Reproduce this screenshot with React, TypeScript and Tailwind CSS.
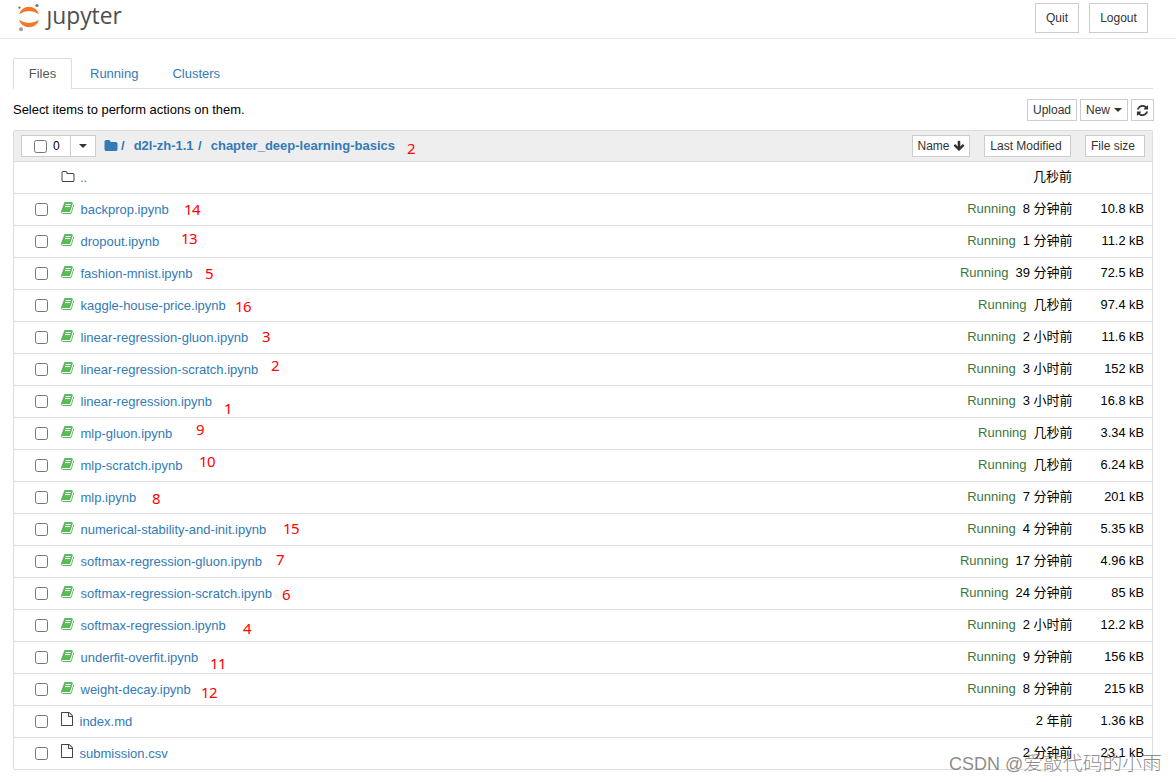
import type { ReactNode } from 'react';

const paths = {
  book: 'M1639 478q40 57 18 129l-275 906q-19 64-76.500 107.500t-122.500 43.500h-923q-77 0-148.500-53.500t-99.500-131.500q-24-67-2-127 0-4 3-27t4-37q1-8-3-21.500t-3-19.500q2-11 8-21t16.500-23.500 16.500-23.500q23-38 45-91.500t30-91.500q3-10 .5-30t-.5-28q3-11 17-28t17-23q21-36 42-92t25-90q1-9-2.500-32t.5-28q4-13 22-30.500t22-22.500q19-26 42.500-84.500t27.500-96.500q1-8-3-25.500t-2-26.500q2-8 9-18t18-23 17-21q8-12 16.500-30.500t15-35 16-36 19.500-32 26.500-23.500 36-11.500 47.500 5.500l-1 3q38-9 51-9h761q74 0 114 56t18 130l-274 906q-36 119-71.500 153.500t-128.500 34.500h-869q-27 0-38 15-11 16-1 43 24 70 144 70h923q29 0 56-15.500t35-41.500l300-987q7-22 5-57 38 15 59 43zm-1064 2q-4 13 2 22.500t20 9.500h608q13 0 25.500-9.500t16.500-22.500l21-64q4-13-2-22.500t-20-9.500h-608q-13 0-25.500 9.500t-16.500 22.500zm-83 256q-4 13 2 22.500t20 9.500h608q13 0 25.500-9.500t16.500-22.500l21-64q4-13-2-22.500t-20-9.500h-608q-13 0-25.500 9.500t-16.500 22.500z',
  refresh: 'M1639 1056q0 5-1 7-64 268-268 434.500t-478 166.500q-146 0-282.500-55t-243.500-157l-129 129q-19 19-45 19t-45-19-19-45v-448q0-26 19-45t45-19h448q26 0 45 19t19 45-19 45l-137 137q71 66 161 102t187 36q134 0 250-65t186-179q11-17 53-117 8-23 30-23h192q13 0 22.500 9.500t9.500 22.500zm25-800v448q0 26-19 45t-45 19h-448q-26 0-45-19t-19-45 19-45l138-138q-148-137-349-137-134 0-250 65t-186 179q-11 17-53 117-8 23-30 23h-199q-13 0-22.500-9.500t-9.500-22.500v-7q65-268 270-434.500t480-166.500q146 0 284 55.500t245 156.500l130-129q19-19 45-19t45 19 19 45z',
  arrowDown: 'M1675 832q0 53-37 90l-651 652q-39 37-91 37-53 0-90-37l-651-652q-38-36-38-90 0-53 38-91l74-75q39-37 91-37 53 0 90 37l294 294v-704q0-52 38-90t90-38h128q52 0 90 38t38 90v704l294-294q37-37 90-37 52 0 91 37l75 75q37 39 37 91z',
  folder: 'M1728 608v704q0 92-66 158t-158 66h-1216q-92 0-158-66t-66-158v-960q0-92 66-158t158-66h320q92 0 158 66t66 158v32h672q92 0 158 66t66 158z',
  folderOpen: 'M1600 1312v-704q0-40-28-68t-68-28h-704q-40 0-68-28t-28-68v-64q0-40-28-68t-68-28h-320q-40 0-68 28t-28 68v960q0 40 28 68t68 28h1216q40 0 68-28t28-68zm128-704v704q0 92-66 158t-158 66h-1216q-92 0-158-66t-66-158v-960q0-92 66-158t158-66h320q92 0 158 66t66 158v32h672q92 0 158 66t66 158z',
  file: 'M1596 380q28 28 48 76t20 88v1152q0 40-28 68t-68 28h-1344q-40 0-68-28t-28-68v-1600q0-40 28-68t68-28h896q40 0 88 20t76 48zm-444-244v376h376q-10-29-22-41l-313-313q-12-12-41-22zm384 1528v-1024h-416q-40 0-68-28t-28-68v-416h-768v1536h1280z',
};

function Icon({ name, className }: { name: keyof typeof paths; className: string }) {
  return (
    <svg viewBox="0 0 1792 1792" fill="currentColor" className={`shrink-0 ${className}`}>
      <path d={paths[name]} />
    </svg>
  );
}

function Caret() {
  return <span className="inline-block border-x-4 border-t-4 border-x-transparent border-t-[#333]" />;
}

function Checkbox({ className = '' }: { className?: string }) {
  return <span className={`size-[13px] shrink-0 rounded-[2.5px] border border-[#767676] bg-white ${className}`} />;
}

function Button({ children, className }: { children: ReactNode; className: string }) {
  return (
    <button className={`flex items-center justify-center border border-[#ccc] bg-white text-[#333] ${className}`}>
      {children}
    </button>
  );
}

type Entry = { name: string; time: string; size: string; running?: boolean };

const entries: Entry[] = [
  { name: 'backprop.ipynb', time: '8 分钟前', size: '10.8 kB', running: true },
  { name: 'dropout.ipynb', time: '1 分钟前', size: '11.2 kB', running: true },
  { name: 'fashion-mnist.ipynb', time: '39 分钟前', size: '72.5 kB', running: true },
  { name: 'kaggle-house-price.ipynb', time: '几秒前', size: '97.4 kB', running: true },
  { name: 'linear-regression-gluon.ipynb', time: '2 小时前', size: '11.6 kB', running: true },
  { name: 'linear-regression-scratch.ipynb', time: '3 小时前', size: '152 kB', running: true },
  { name: 'linear-regression.ipynb', time: '3 小时前', size: '16.8 kB', running: true },
  { name: 'mlp-gluon.ipynb', time: '几秒前', size: '3.34 kB', running: true },
  { name: 'mlp-scratch.ipynb', time: '几秒前', size: '6.24 kB', running: true },
  { name: 'mlp.ipynb', time: '7 分钟前', size: '201 kB', running: true },
  { name: 'numerical-stability-and-init.ipynb', time: '4 分钟前', size: '5.35 kB', running: true },
  { name: 'softmax-regression-gluon.ipynb', time: '17 分钟前', size: '4.96 kB', running: true },
  { name: 'softmax-regression-scratch.ipynb', time: '24 分钟前', size: '85 kB', running: true },
  { name: 'softmax-regression.ipynb', time: '2 小时前', size: '12.2 kB', running: true },
  { name: 'underfit-overfit.ipynb', time: '9 分钟前', size: '156 kB', running: true },
  { name: 'weight-decay.ipynb', time: '8 分钟前', size: '215 kB', running: true },
  { name: 'index.md', time: '2 年前', size: '1.36 kB' },
  { name: 'submission.csv', time: '2 分钟前', size: '23.1 kB' },
];

// Reading-order markers placed freely over the list: label, left, vertical centre.
const notes: [string, number, number][] = [
  ['2', 407, 148], ['14', 184, 209], ['13', 181, 238], ['5', 205, 273], ['16', 235, 306],
  ['3', 262, 336], ['2', 271, 365], ['1', 224, 408], ['9', 196, 429], ['10', 199, 461],
  ['8', 152, 498], ['15', 283, 528], ['7', 276, 559], ['6', 282, 594], ['4', 243, 628],
  ['11', 210, 663], ['12', 201, 692],
];

function Row({ entry }: { entry: Entry }) {
  const notebook = entry.name.endsWith('.ipynb');
  return (
    <li className="flex h-8 items-center border-t border-[#ddd] pr-2 pl-[21px]">
      <Checkbox />
      {notebook ? (
        <Icon name="book" className="mr-[5.5px] mb-[3px] ml-[13px] size-[14px] text-[#5cb85c]" />
      ) : (
        <Icon name="file" className="mr-[5.5px] mb-[5px] ml-[12px] size-[14px] text-[#444]" />
      )}
      <a className="text-[#337ab7]">{entry.name}</a>
      <div className="ml-auto flex pb-0.5 text-[13px]">
        {entry.running && <span className="mr-[7px] text-[#3c763d]">Running</span>}
        <span>{entry.time}</span>
        <span className="w-[71.5px] text-right text-[12.8px]">{entry.size}</span>
      </div>
    </li>
  );
}

export default function App() {
  return (
    <div className="relative h-[782px] w-[1176px] overflow-hidden bg-white font-['Liberation_Sans','Noto_Sans_CJK_SC',sans-serif] text-[13px] leading-5 text-black">
      <header className="flex h-[39px] items-start border-b border-[#e7e7e7] pr-7 pl-[17px]">
        <svg viewBox="0 0 24 32" className="mt-0.5 h-8 w-6">
          <path d="M2 12.300A10.400 10.400 0 0 1 22 12.300Q12 5.500 2 12.300ZM2 17.700A10.400 10.400 0 0 0 22 17.700Q12 24.500 2 17.700Z" fill="#f37726" />
          <circle cx="20" cy="3.500" r="1.600" fill="#767677" />
          <circle cx="2.500" cy="5.700" r="1.100" fill="#616262" />
          <circle cx="4" cy="27.300" r="2" fill="#9e9e9e" />
        </svg>
        <span className="ml-[5.5px] font-['Open_Sans',sans-serif] text-[22.800px] leading-[32px] text-[#4e4e4e]">ȷupyter</span>
        <div className="mt-[3px] ml-auto flex gap-[10px] text-[12px]">
          <Button className="h-[30px] w-[44px]">Quit</Button>
          <Button className="h-[30px] w-[59px]">Logout</Button>
        </div>
      </header>

      <main className="pr-[23px] pl-[13px]">
        <nav className="mt-[19px] flex h-[31px] border-b border-[#ddd]">
          <a className="h-[31px] w-[59px] rounded-t-[2px] border border-b-0 border-[#ddd] bg-white pt-[5px] text-center text-[#555]">Files</a>
          <a className="pt-[6px] pl-[18px] text-[#337ab7]">Running</a>
          <a className="pt-[6px] pl-[34px] text-[#337ab7]">Clusters</a>
        </nav>

        <div className="-mr-px flex h-[41px] pt-[10px] text-[12px]">
          <span className="mt-px mr-auto text-[12.950px]">Select items to perform actions on them.</span>
          <Button className="mr-[3px] h-[22px] w-[50px]">Upload</Button>
          <Button className="mr-[3px] h-[22px] w-[48px] gap-1">New <Caret /></Button>
          <Button className="h-[22px] w-[23px]"><Icon name="refresh" className="size-[13px]" /></Button>
        </div>

        <section className="rounded-[2px] border border-[#ddd]">
          <div className="flex h-[30px] items-center bg-[#eee] pl-[7px] text-[12px]">
            <div className="flex h-[22px] w-[75px] border border-[#ccc] bg-white">
              <span className="flex w-[49px] items-center border-r border-[#ccc] pl-3">
                <Checkbox className="mr-[6px]" />0
              </span>
              <span className="flex grow items-center justify-center"><Caret /></span>
            </div>
            <div className="flex items-center text-[13px] font-bold text-[#337ab7]">
              <Icon name="folder" className="ml-2 size-[14px]" />
              <span className="ml-[3px]">/</span>
              <a className="ml-[9px]">d2l-zh-1.1</a>
              <span className="ml-[4.5px]">/</span>
              <a className="ml-[9px]">chapter_deep-learning-basics</a>
            </div>
            <Button className="mr-[14px] ml-auto h-[22px] w-[58px] gap-[3px]">Name <Icon name="arrowDown" className="size-3" /></Button>
            <Button className="mr-[14px] h-[22px] w-[87px] pr-[3px]">Last Modified</Button>
            <Button className="mr-[7px] h-[22px] w-[60px] pr-[4px]">File size</Button>
          </div>
          <ul>
            <li className="flex h-8 items-center border-t border-[#ddd] pl-[47px]">
              <Icon name="folderOpen" className="mr-[5px] mb-[1px] size-[14px] text-[#444]" />
              <a className="text-[#337ab7]">..</a>
              <span className="mr-20 ml-auto pb-0.5">几秒前</span>
            </li>
            {entries.map((entry) => <Row key={entry.name} entry={entry} />)}
          </ul>
        </section>
      </main>

      {notes.map(([label, x, y]) => (
        <span
          key={`${x}-${y}`}
          className="absolute -translate-y-1/2 font-['Noto_Sans',sans-serif] text-[15px] leading-5 tracking-[-0.5px] text-[#f00]"
          style={{ left: x, top: y }}
        >
          {label}
        </span>
      ))}
      <span className="absolute top-[751px] left-[949px] text-[18px] leading-6 font-light whitespace-nowrap text-[#666]/75">
        CSDN @<span className="text-[19.8px]">爱敲代码的小雨</span>
      </span>
    </div>
  );
}
